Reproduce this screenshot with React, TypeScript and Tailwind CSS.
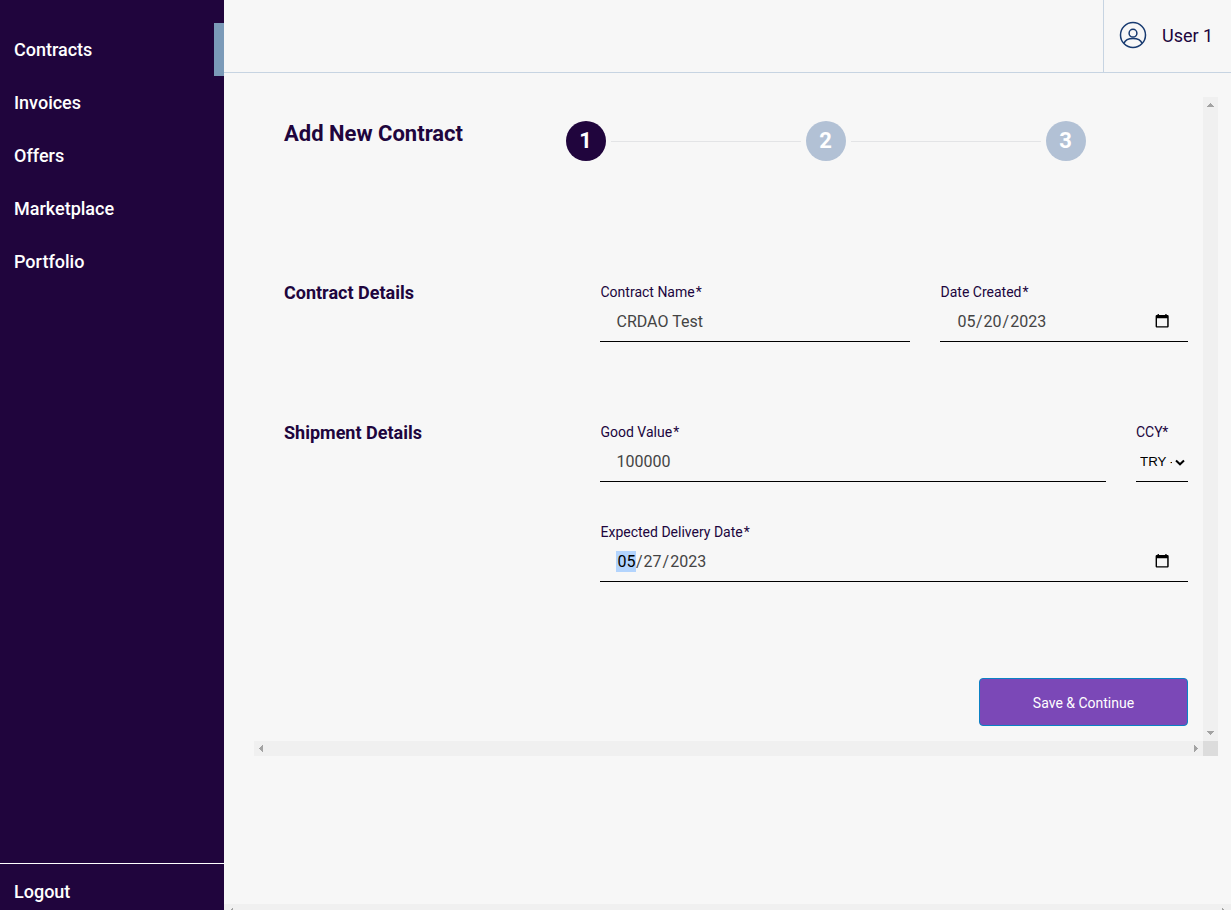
import React from "react";

const navItems = ["Contracts", "Invoices", "Offers", "Marketplace", "Portfolio"];

function UserIcon() {
  return (
    <svg className="mb-0.5 h-7 w-7" viewBox="0 0 28 28" fill="none" stroke="#173a70" strokeWidth="1.5">
      <circle cx="14" cy="14" r="12.5" />
      <circle cx="14" cy="12.2" r="3.9" />
      <path d="M4.9 22.4C6.2 19.2 9.7 17.6 14 17.6s7.800 1.600 9.100 4.800" />
    </svg>
  );
}

function CalendarIcon() {
  return (
    <svg className="mr-[18px] mb-0.5 h-4 w-4" viewBox="0 0 16 16">
      <path d="M3.600 .9h1.300v1.200h6.400v-1.200h1.300v1.200h.7c.8 0 1.400.5 1.400 1.300v9.900c0 .8-.6 1.300-1.400 1.300H3c-.8 0-1.400-.5-1.400-1.300V3.400c0-.8.6-1.300 1.400-1.300h.6zM3 5.200v8.100h10.200V5.200z" fill="#000" fillRule="evenodd" />
    </svg>
  );
}

function Label({ text }: { text: string }) {
  return (
    <div className="flex h-5 gap-px pl-[0.5px] text-sm leading-5 text-[#20053d]">
      <span>{text}</span>
      <span>*</span>
    </div>
  );
}

function TextField({ label, value, className }: { label: string; value: string; className: string }) {
  return (
    <div className={className}>
      <Label text={label} />
      <div className="flex h-10 items-center border-b border-black pl-[16.5px] text-base text-[#444]">{value}</div>
    </div>
  );
}

function DateField({ label, parts, selected, className }: { label: string; parts: string[]; selected?: boolean; className: string }) {
  return (
    <div className={className}>
      <Label text={label} />
      <div className="flex h-10 items-center justify-between border-b border-black pl-4 text-base text-[#444]">
        <div className="flex leading-[21px]">
          <span className={selected ? "bg-[#b3d4fd] pr-[0.5px] pl-[1.5px] text-black" : "pr-[0.5px] pl-[1.5px]"}>{parts[0]}</span>
          <span>/</span>
          <span className="px-px">{parts[1]}</span>
          <span>/</span>
          <span className="px-px">{parts[2]}</span>
        </div>
        <CalendarIcon />
      </div>
    </div>
  );
}

function Arrow({ dir }: { dir: "up" | "down" | "left" | "right" }) {
  const paths = {
    up: "M4 10h7L7.500 6z",
    down: "M4 5h7L7.500 9z",
    left: "M9 4v7L5 7.500z",
    right: "M6 4v7l4-3.500z",
  };
  return (
    <svg className="h-[15px] w-[15px] shrink-0" viewBox="0 0 15 15" shapeRendering="crispEdges">
      <path d={paths[dir]} fill="#a3a3a3" />
    </svg>
  );
}

function Step({ n, active }: { n: number; active?: boolean }) {
  return (
    <div className={active ? "flex h-10 w-10 items-center justify-center rounded-full bg-[#20053d] text-[22px] font-bold text-white" : "flex h-10 w-10 items-center justify-center rounded-full bg-[#b2c1d5] text-[22px] font-bold text-white"}>
      <span className="-mt-0.5 -ml-px">{n}</span>
    </div>
  );
}

export default function App() {
  return (
    <div className="flex h-[910px] w-[1231px] overflow-hidden bg-[#f7f7f7] font-[Roboto,sans-serif] text-[#20053d]">
      <aside className="flex w-56 shrink-0 flex-col bg-[#20053d] pt-[23px] text-lg font-medium text-white">
        <nav className="flex flex-1 flex-col">
          {navItems.map((item, i) => (
            <a key={item} className={i === 0 ? "flex h-[53px] items-center border-r-[10px] border-[#7b9ab8] pl-3.5" : "flex h-[53px] items-center pl-3.5"}>
              {item}
            </a>
          ))}
        </nav>
        <div className="h-[47px] border-t border-white pt-3.5 pl-3.5">Logout</div>
      </aside>

      <div className="flex min-w-0 flex-1 flex-col">
        <header className="flex h-[73px] shrink-0 justify-end border-b border-[#c7d4e2]">
          <div className="flex w-32 items-center border-l border-[#c7d4e2] pl-[15px] text-lg">
            <UserIcon />
            <span className="ml-[15px]">User 1</span>
          </div>
        </header>

        <main className="flex flex-1 flex-col">
          <div className="mt-6 ml-[30px] grid h-[659px] w-[964px] grid-cols-[949px_15px] grid-rows-[644px_15px]">
            <section className="pt-6 pl-[30px]">
              <div className="flex h-[160px]">
                <h1 className="w-[282px] pt-px text-[22px] leading-6 font-bold">Add New Contract</h1>
                <div className="flex h-10 items-center">
                  <Step n={1} active />
                  <div className="mt-px ml-[5px] mr-[5px] h-px w-[190px] bg-[#e3e4e6]" />
                  <Step n={2} />
                  <div className="mt-px ml-[5px] mr-[5px] h-px w-[190px] bg-[#e3e4e6]" />
                  <Step n={3} />
                </div>
              </div>
              <div className="flex h-[140px]">
                <h2 className="w-[316px] text-lg leading-6 font-bold">Contract Details</h2>
                <div className="flex gap-[30px] pt-px">
                  <TextField label="Contract Name" value="CRDAO Test" className="w-[310px]" />
                  <DateField label="Date Created" parts={["05", "20", "2023"]} className="w-[248px]" />
                </div>
              </div>
              <div className="flex">
                <h2 className="w-[316px] text-lg leading-6 font-bold">Shipment Details</h2>
                <div className="pt-px">
                  <div className="flex h-[100px] gap-[30px]">
                    <TextField label="Good Value" value="100000" className="w-[506px]" />
                    <div className="w-[52px]">
                      <div className="h-5 text-sm leading-5">CCY*</div>
                      <div className="flex h-10 items-center border-b border-black pl-1 font-['Liberation_Sans',sans-serif] text-[13.333px] text-black">
                        <span className="mr-0.5 w-8 shrink-0 overflow-hidden whitespace-nowrap">TRY -</span>
                        <svg className="h-3 w-3 shrink-0" viewBox="0 0 12 12" fill="none" stroke="#000" strokeWidth="2">
                          <path d="M2 4.500l4 3.800 4-3.800" />
                        </svg>
                      </div>
                    </div>
                  </div>
                  <DateField label="Expected Delivery Date" parts={["05", "27", "2023"]} selected className="w-[588px]" />
                  <div className="flex justify-end pt-24">
                    <button className="h-12 w-[209px] rounded border border-[#0b82c5] bg-[#7b48b7] pt-0.5 text-sm text-white">Save &amp; Continue</button>
                  </div>
                </div>
              </div>
            </section>
            <div className="flex flex-col justify-between bg-[#f0f0f0]">
              <Arrow dir="up" />
              <Arrow dir="down" />
            </div>
            <div className="flex justify-between bg-[#f0f0f0]">
              <Arrow dir="left" />
              <Arrow dir="right" />
            </div>
            <div className="bg-[#dcdcdc]" />
          </div>
          <div className="mt-auto flex h-1.5 justify-between overflow-hidden bg-[#f0f0f0]">
            <Arrow dir="left" />
            <Arrow dir="right" />
          </div>
        </main>
      </div>
    </div>
  );
}
